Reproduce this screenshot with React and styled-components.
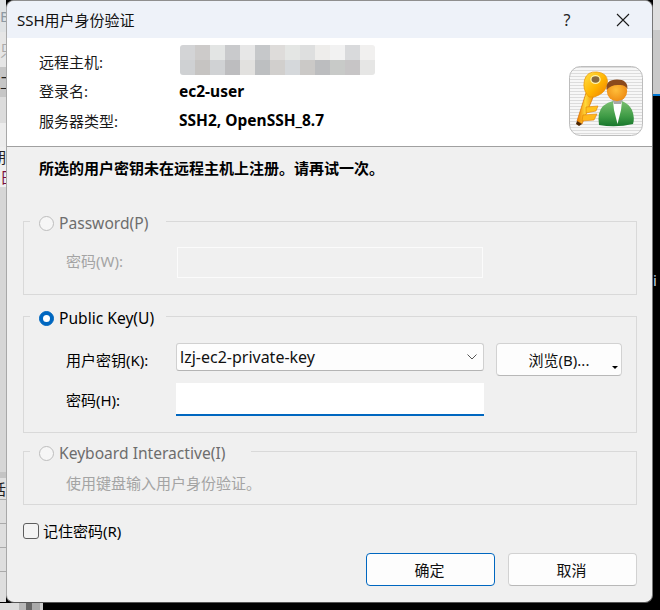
import React from 'react';
import styled, { createGlobalStyle } from 'styled-components';

const Global = createGlobalStyle`
  html, body { margin: 0; padding: 0; background: #000; }
  body { font-family: "Noto Sans", "Noto Sans CJK SC", sans-serif; font-size: 15px; color: #000; }
  * { box-sizing: border-box; }
`;

const Desktop = styled.div`
  width: 660px; height: 610px; overflow: hidden;
  display: grid; grid-template-columns: 6px 647px 7px; grid-template-rows: 603px 7px;
`;
const Strip = styled.div`
  display: flex; flex-direction: column; overflow: hidden; min-width: 0;
`;
const BottomStrip = styled.div`
  grid-column: 1 / 4; display: flex; height: 7px; overflow: hidden;
`;
const Band = styled.div`
  height: ${p => p.$h}px; flex: none; background: ${p => p.$c};
  border-bottom: ${p => (p.$line ? `1px solid ${p.$line}` : 'none')};
  display: flex; align-items: center; justify-content: ${p => p.$right ? 'flex-end' : 'flex-start'};
  font-size: 15px; line-height: 20px; white-space: nowrap; color: ${p => p.$ink || '#222'};
`;
const Patch = styled.div`
  width: ${p => p.$w}px; flex: ${p => (p.$grow ? '1' : 'none')}; background: ${p => p.$c};
`;

const Dialog = styled.div`
  background: #f0f0f0; border: 1px solid #8f8f8f; border-left-color: #a8a8a8; border-radius: 8px; overflow: hidden;
  display: flex; flex-direction: column; min-width: 0; border-bottom-color: #555; border-right-color: #777;
`;
const TitleBar = styled.div`
  height: 37px; flex: none; background: #eef2f9; display: flex; align-items: center; padding-left: 10px;
`;
const Title = styled.div` flex: 1; line-height: 20px; font-size: 15px; color: #111; `;
const Help = styled.div`
  width: 20px; margin-right: 39px; text-align: center; font-size: 16px; color: #222; line-height: 20px;
`;
const Close = styled.svg` width: 14px; height: 14px; margin-right: 22px; flex: none; `;

const Header = styled.div`
  height: 108px; flex: none; background: #fff; display: flex; padding: 9px 9px 0 32px; position: relative;
  justify-content: space-between;
`;
const Facts = styled.div`
  display: grid; grid-template-columns: 140px auto; grid-auto-rows: 29.5px; align-items: center; align-self: flex-start;
`;
const FactLabel = styled.div` line-height: 20px; color: #1a1a1a; `;
const FactValue = styled.div` font-weight: 700; line-height: 20px; white-space: nowrap; font-size: 15.5px; margin-top: -1px; `;
const Blur = styled.div`
  display: grid; grid-template-columns: repeat(13, 15px); grid-auto-rows: 15px; margin: -4px 0 0 1px; border-radius: 3px; overflow: hidden; width: 195px;
`;
const Cell = styled.div` background: ${p => p.$c}; `;
const Badge = styled.svg` width: 74px; height: 70px; margin-top: 19px; flex: none; `;

const Divider = styled.div` height: 1px; flex: none; background: #a0a0a0; `;

const Body = styled.div` flex: 1; display: flex; flex-direction: column; padding: 11px 15px 0 16px; `;
const Message = styled.div` font-weight: 700; line-height: 20px; margin-left: 16px; font-size: 15px; `;

const Group = styled.fieldset`
  margin: ${p => p.$top}px 0 0; padding: ${p => p.$pt}px 0 ${p => p.$pb}px 0; border: 1px solid #d9d9d9; min-width: 0;
`;
const Legend = styled.legend`
  margin-left: 6px; padding: 4px ${p => p.$gap}px 0 9px; height: 24px; display: flex; align-items: center; gap: 5px; line-height: 20px;
  font-size: 15.6px; color: ${p => (p.$off ? '#6d6d6d' : '#000')};
`;
const GroupContent = styled.div` padding-left: 42px; `;
const Radio = styled.span`
  width: 15px; height: 15px; border-radius: 50%; flex: none; display: flex; align-items: center; justify-content: center;
  background: ${p => (p.$on ? '#0067c0' : '#f6f6f6')};
  border: 1px solid ${p => (p.$on ? '#0067c0' : '#bdbdbd')};
  &::after { content: ''; width: 7px; height: 7px; border-radius: 50%; background: ${p => (p.$on ? '#fff' : 'transparent')}; }
`;
const Row = styled.div`
  display: flex; align-items: ${p => p.$top ? 'flex-start' : 'center'}; margin-top: ${p => p.$mt || 0}px; height: ${p => p.$h}px;
`;
const Label = styled.label`
  width: 110px; flex: none; line-height: 20px; color: ${p => (p.$off ? '#a4a4a4' : '#000')};
  padding-top: ${p => p.$pt || 0}px; padding-bottom: ${p => p.$pb || 0}px;
`;
const DisabledField = styled.div`
  width: 306px; height: 31px; margin-left: 1px; border: 1px solid #fbfbfb; background: #f0f0f0;
`;
const Combo = styled.div`
  width: 308px; height: 28px; flex: none; background: #fdfdfd; border: 1px solid #d0d0d0; border-bottom-color: #b4b4b4; border-radius: 3px;
  display: flex; align-items: center; justify-content: space-between; padding: 0 6px 0 3px; line-height: 20px; color: #111; font-size: 16px;
`;
const Chevron = styled.svg` width: 10px; height: 6px; flex: none; `;
const Browse = styled.button`
  width: 126px; height: 33px; flex: none; margin-left: 12px; position: relative; font: inherit; color: #111; background: #fdfdfd;
  border: 1px solid #d2d2d2; border-bottom-color: #b8b8b8; border-radius: 4px; padding: 0; line-height: 20px;
  &::after { content: ''; position: absolute; right: 3px; bottom: 6px; border: 3px solid transparent; border-top: 3px solid #000; border-bottom: 0; }
`;
const PassField = styled.div`
  width: 308px; height: 33px; background: #fff; border-bottom: 2px solid #0067c0;
`;
const Hint = styled.div` line-height: 20px; color: #a4a4a4; `;
const Remember = styled.div` display: flex; align-items: center; gap: 4px; margin-top: 18px; height: 16px; line-height: 20px; `;
const Box = styled.span` width: 16px; height: 16px; border: 1px solid #5e5e5e; border-radius: 3px; background: #f4f4f4; flex: none; `;
const Actions = styled.div` display: flex; justify-content: flex-end; gap: 13px; margin-top: 14px; `;
const Action = styled.button`
  width: 129px; height: 33px; font: inherit; color: #111; background: #fdfdfd; border-radius: 4px; line-height: 20px; padding: 0 2px 0 0;
  border: 1px solid ${p => (p.$primary ? '#0067c0' : '#d2d2d2')};
  border-bottom-color: ${p => (p.$primary ? '#0067c0' : '#b8b8b8')};
`;

const BLUR = [
  '#d3d4d6','#cdcbca','#e3e5e4','#c9cacc','#e7e7e7','#c6c8ca','#dedcda','#e4e6e4','#dedfdf','#eeedeb','#f2f2f2','#d9dadc','#f1f0ef',
  '#cfd1d3','#c6c4c2','#d0d2d4','#bdbdbf','#e2e1df','#bdbfc1','#d1cfcd','#d5d8db','#cbc9c7','#bcbdbf','#c8cac8','#c7c5c6','#e6e6e5',
];

const stripes = Array.from({ length: 23 }, (_, i) => i * 3 + 1);

function KeyUserIcon() {
  return (
    <Badge viewBox="0 0 74 70" aria-hidden="true">
      <defs>
        <clipPath id="rr"><rect x="0.5" y="0.5" width="73" height="69" rx="11" /></clipPath>
        <linearGradient id="gold" x1="0" y1="0" x2="1" y2="1">
          <stop offset="0" stopColor="#ffe04a" /><stop offset="0.55" stopColor="#ffb400" /><stop offset="1" stopColor="#ee7a00" />
        </linearGradient>
        <linearGradient id="shaft" x1="0" y1="0" x2="1" y2="0">
          <stop offset="0" stopColor="#ee7c00" /><stop offset="0.5" stopColor="#ffd83a" /><stop offset="1" stopColor="#f59000" />
        </linearGradient>
        <linearGradient id="green" x1="0" y1="0" x2="0" y2="1">
          <stop offset="0" stopColor="#7abf70" /><stop offset="0.6" stopColor="#3f9c46" /><stop offset="1" stopColor="#17762c" />
        </linearGradient>
        <radialGradient id="face" cx="0.45" cy="0.45" r="0.6">
          <stop offset="0" stopColor="#ffbe3a" /><stop offset="1" stopColor="#ee8a12" />
        </radialGradient>
      </defs>
      <g clipPath="url(#rr)">
        <rect width="74" height="70" fill="#f7f7f7" />
        {stripes.map(y => <rect key={y} x="0" y={y} width="74" height="1" fill="#dcdcdc" />)}
      </g>
      <rect x="0.5" y="0.5" width="73" height="69" rx="11" fill="none" stroke="#bdbdbd" />
      <path d="M17 27 L8 55 L13 58 L25 29Z" fill="url(#shaft)" stroke="#d97000" strokeWidth="0.7" />
      <path d="M8 55 L13 58 L10 60 L7 58Z" fill="#4a2400" />
      <path d="M17 41 L29 40 L27 45 L17 47Z" fill="#ffc21c" stroke="#e07f00" strokeWidth="0.6" />
      <path d="M14 49 L28 48 L25 54 L13 55Z" fill="#ffb81c" stroke="#e07f00" strokeWidth="0.6" />
      <path d="M20 31 Q13 24 15.5 14 Q18 5 28 6 Q38 7 38.5 15 Q38 25 30 29 Q25 32 20 31Z" fill="url(#gold)" stroke="#ea9400" strokeWidth="0.7" />
      <ellipse cx="26.5" cy="13.5" rx="4.6" ry="3.8" fill="#86683f" stroke="#fff3a8" strokeWidth="1.3" />
      <path d="M30 59 Q28 46 34 40 Q39 36 44 35 L53 35 Q60 38 63 44 Q66 52 64 58 Q47 62 30 59Z" fill="url(#green)" />
      <path d="M44 35 L53 35 L52 44 L48.5 58 L45 44Z" fill="#fff" />
      <path d="M43 33 L54 33 L52 38 L45 38Z" fill="#a8a8a8" />
      <circle cx="48" cy="25" r="10.2" fill="url(#face)" />
      <path d="M37.7 24 Q36 13.5 48 13.5 Q59 13.5 58.4 23 Q56 18.5 50 19 Q42 18.5 37.7 24Z" fill="#8b4a1c" />
    </Badge>
  );
}

export default function App() {
  return (
    <>
      <Global />
      <Desktop>
        <Strip>
          <Band $h={32} $c="#dfe2e4" $ink="#8d99a3">B</Band>
          <Band $h={35} $c="#e6e6e6" $ink="#aaa">只</Band>
          <Band $h={30} $c="#c6c6c6" $ink="#222">工</Band>
          <Band $h={26} $c="#dcdcdc" />
          <Band $h={24} $c="#ececec" />
          <Band $h={20} $c="#efefef" $ink="#222" $right>期</Band>
          <Band $h={20} $c="#efefef" $ink="#7a0c3c">日</Band>
          <Band $h={285} $c="#d6d6d6" />
          <Band $h={6} $c="#c4c4c4" />
          <Band $h={22} $c="#e0e0e0" $line="#aaa" $ink="#222" $right>话</Band>
          <Band $h={24} $c="#dedede" $line="#aaa" />
          <Band $h={24} $c="#dedede" $line="#aaa" />
          <Band $h={24} $c="#dedede" $line="#aaa" />
          <Band $h={30} $c="#dedede" />
        </Strip>
        <Dialog>
          <TitleBar>
            <Title>SSH用户身份验证</Title>
            <Help>?</Help>
            <Close viewBox="0 0 14 14" aria-hidden="true">
              <path d="M1 1 L13 13 M13 1 L1 13" stroke="#1a1a1a" strokeWidth="1.1" fill="none" />
            </Close>
          </TitleBar>
          <Header>
            <Facts>
              <FactLabel>远程主机:</FactLabel>
              <Blur>{BLUR.map((c, i) => <Cell key={i} $c={c} />)}</Blur>
              <FactLabel>登录名:</FactLabel>
              <FactValue>ec2-user</FactValue>
              <FactLabel>服务器类型:</FactLabel>
              <FactValue>SSH2, OpenSSH_8.7</FactValue>
            </Facts>
            <KeyUserIcon />
          </Header>
          <Divider />
          <Body>
            <Message>所选的用户密钥未在远程主机上注册。请再试一次。</Message>
            <Group $top={31} $pt={14} $pb={16}>
              <Legend $off $gap={18}><Radio />Password(P)</Legend>
              <GroupContent>
                <Row $h={31}>
                  <Label $off $pb={3}>密码(W):</Label>
                  <DisabledField />
                </Row>
              </GroupContent>
            </Group>
            <Group $top={9} $pt={15} $pb={16}>
              <Legend $gap={12}><Radio $on />Public Key(U)</Legend>
              <GroupContent>
                <Row $h={33} $top>
                  <Label $pt={7}>用户密钥(K):</Label>
                  <Combo>
                    lzj-ec2-private-key
                    <Chevron viewBox="0 0 10 6" aria-hidden="true">
                      <path d="M0.5 0.5 L5 5 L9.5 0.5" stroke="#555" strokeWidth="1" fill="none" />
                    </Chevron>
                  </Combo>
                  <Browse>浏览(B)...</Browse>
                </Row>
                <Row $h={33} $mt={7}>
                  <Label>密码(H):</Label>
                  <PassField />
                </Row>
              </GroupContent>
            </Group>
            <Group $top={6} $pt={10} $pb={11}>
              <Legend $off $gap={26}><Radio />Keyboard Interactive(I)</Legend>
              <GroupContent>
                <Hint>使用键盘输入用户身份验证。</Hint>
              </GroupContent>
            </Group>
            <Remember><Box />记住密码(R)</Remember>
            <Actions>
              <Action $primary>确定</Action>
              <Action>取消</Action>
            </Actions>
          </Body>
        </Dialog>
        <Strip>
          <Band $h={30} $c="#dedede" />
          <Band $h={64} $c="#c9c9c9" />
          <Band $h={2} $c="#0078d4" />
          <Band $h={174} $c="#000" />
          <Band $h={20} $c="#000" $ink="#c9d7e6">i</Band>
          <Band $h={313} $c="#000" />
        </Strip>
        <BottomStrip>
          <Patch $w={19} $c="#dcdcdc" />
          <Patch $w={7} $c="#b8b8b8" />
          <Patch $w={6} $c="#666" />
          <Patch $w={8} $c="#aaa" />
          <Patch $w={3} $c="#ccc" />
          <Patch $grow $c="#000" />
        </BottomStrip>
      </Desktop>
    </>
  );
}
